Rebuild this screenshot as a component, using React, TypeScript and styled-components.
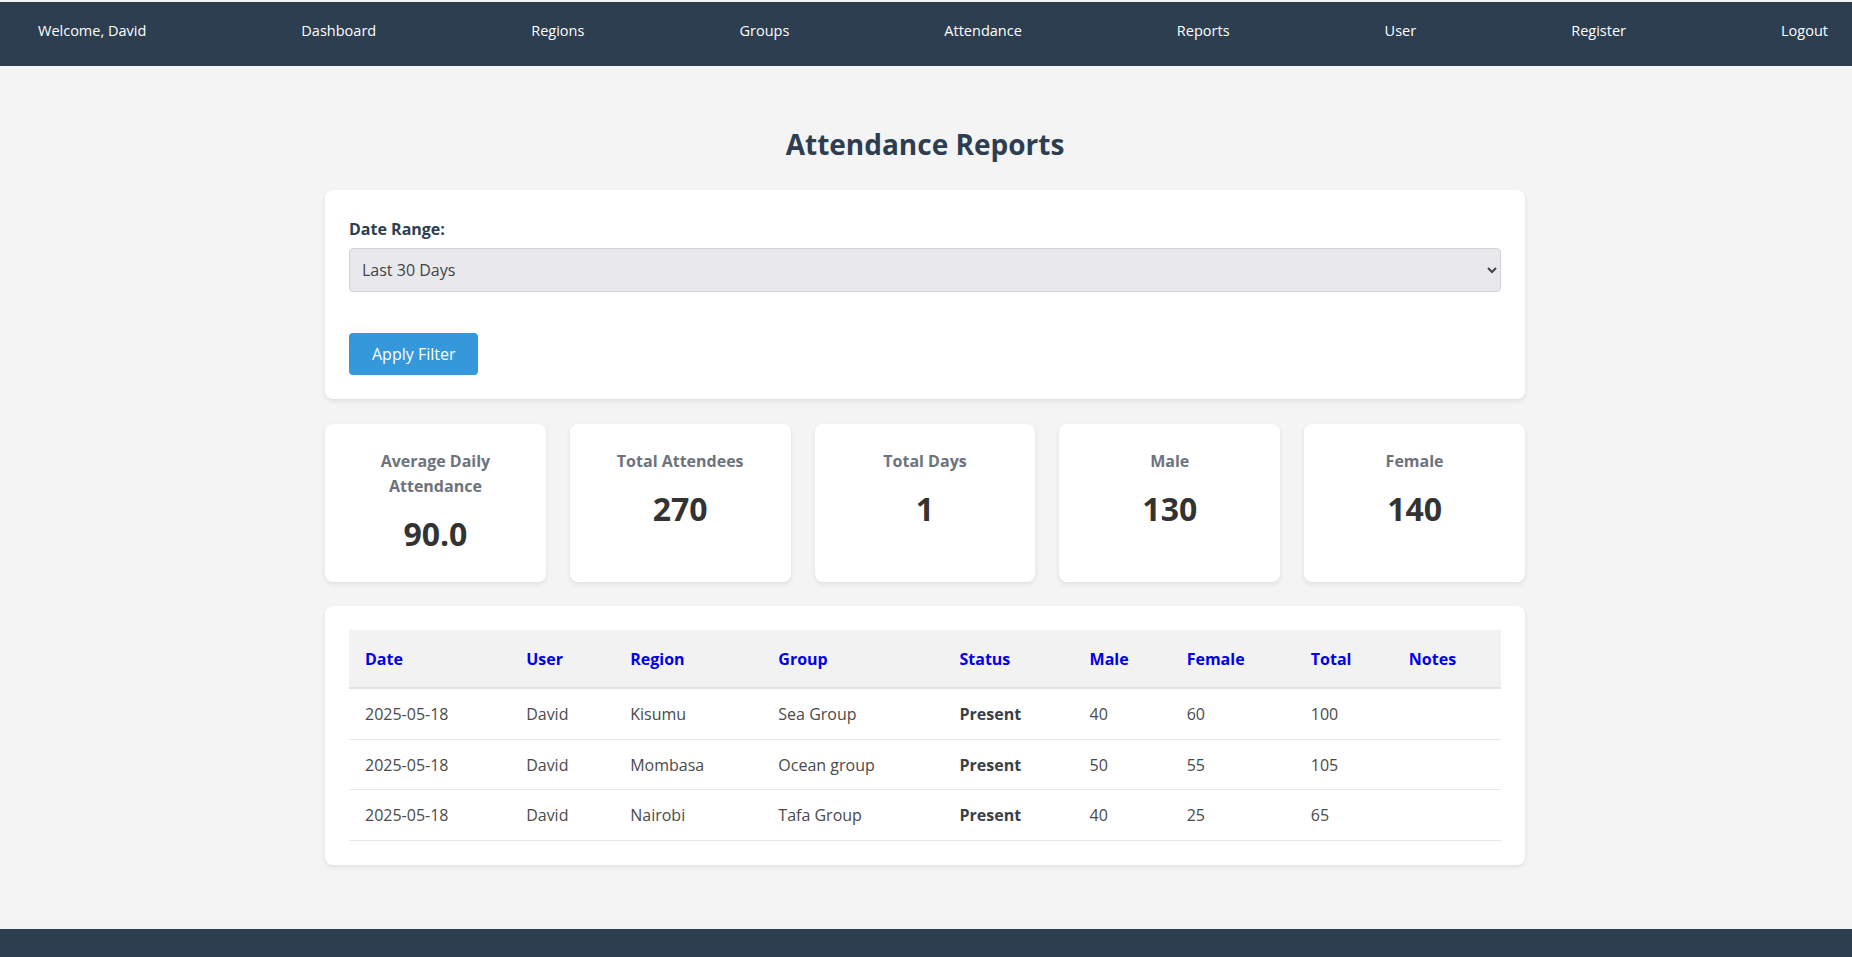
import React from "react";
import styled, { createGlobalStyle } from "styled-components";

const GlobalStyle = createGlobalStyle`
  * { box-sizing: border-box; }
  html, body {
    margin: 0;
    padding: 0;
    background: #f4f4f4;
    font-family: "Open Sans", "Noto Sans", Arial, sans-serif;
    color: #333;
    line-height: 1.6;
  }
`;

const Page = styled.div`
  padding-top: 2px;
  display: flex;
  flex-direction: column;
`;

const NavBar = styled.nav`
  height: 64px;
  background: #2c3e50;
  display: flex;
  align-items: flex-start;
  justify-content: space-between;
  padding: 17px 24px 0 38px;
`;

const NavItem = styled.a`
  color: #fff;
  font-size: 14.5px;
  line-height: 24px;
  text-decoration: none;
`;

const Main = styled.main`
  width: 1202px;
  margin: 0 auto;
  padding: 56px 2px 64px 0;
`;

const Title = styled.h1`
  margin: 0 0 23px;
  text-align: center;
  font-size: 28px;
  font-weight: 700;
  color: #2c3e50;
`;

const Card = styled.section`
  background: #fff;
  border-radius: 8px;
  box-shadow: 0 2px 5px rgba(0, 0, 0, 0.09);
  padding: 24px;
  margin-bottom: 25px;

  &:last-child {
    margin-bottom: 0;
  }
`;

const FieldLabel = styled.label`
  display: block;
  font-size: 16px;
  font-weight: 700;
  color: #2c3e50;
  margin: 3px 0 6px;
`;

const Select = styled.select`
  display: block;
  width: 100%;
  height: 44px;
  padding: 0 14px 0 8px;
  font-family: "Open Sans", "Noto Sans", Arial, sans-serif;
  font-size: 16px;
  color: #444;
  background-color: #e9e9ed;
  border: 1px solid #d4d4d8;
  border-radius: 4px;
  margin-bottom: 41px;
`;

const Button = styled.button`
  height: 42px;
  padding: 0 23px;
  background: #3498db;
  color: #fff;
  border: none;
  border-radius: 4px;
  font-family: "Open Sans", "Noto Sans", Arial, sans-serif;
  font-size: 16px;
  cursor: pointer;
`;

const StatsGrid = styled.div`
  display: grid;
  grid-template-columns: repeat(5, 1fr);
  gap: 24px;
  margin-bottom: 24px;
`;

const StatCard = styled.div`
  background: #fff;
  border-radius: 8px;
  box-shadow: 0 2px 5px rgba(0, 0, 0, 0.09);
  padding: 25px 32px 22px;
  text-align: center;
`;

const StatTitle = styled.h3`
  margin: 0 0 9px;
  font-size: 16px;
  line-height: 25px;
  font-weight: 700;
  color: #6c737d;
`;

const StatValue = styled.p`
  margin: 0;
  font-size: 32px;
  font-weight: 700;
  color: #333;
`;

const Table = styled.table`
  width: 100%;
  border-collapse: collapse;
  table-layout: fixed;
`;

const Th = styled.th`
  text-align: left;
  padding: 17px 16px 15px;
  background: #f2f2f2;
  color: #0000ee;
  font-size: 16px;
  font-weight: 700;
  border-bottom: 2px solid #e2e2e2;
`;

const Td = styled.td<{ $strong?: boolean }>`
  padding: 13px 16px 11px;
  font-size: 16px;
  color: ${(p) => (p.$strong ? "#3a3f47" : "#4a4a4a")};
  font-weight: ${(p) => (p.$strong ? 700 : 400)};
  border-bottom: 1px solid #e6e8eb;
`;

const Footer = styled.footer`
  background: #2c3e50;
  height: 60px;
  flex-shrink: 0;
`;

const navItems = [
  "Welcome, David",
  "Dashboard",
  "Regions",
  "Groups",
  "Attendance",
  "Reports",
  "User",
  "Register",
  "Logout",
];

const stats = [
  { title: "Average Daily Attendance", value: "90.0" },
  { title: "Total Attendees", value: "270" },
  { title: "Total Days", value: "1" },
  { title: "Male", value: "130" },
  { title: "Female", value: "140" },
];

const columns = [
  { name: "Date", width: 161 },
  { name: "User", width: 104 },
  { name: "Region", width: 148 },
  { name: "Group", width: 181 },
  { name: "Status", width: 130 },
  { name: "Male", width: 97 },
  { name: "Female", width: 124 },
  { name: "Total", width: 98 },
  { name: "Notes", width: 108 },
];

const rows = [
  { date: "2025-05-18", user: "David", region: "Kisumu", group: "Sea Group", status: "Present", male: 40, female: 60, total: 100, notes: "" },
  { date: "2025-05-18", user: "David", region: "Mombasa", group: "Ocean group", status: "Present", male: 50, female: 55, total: 105, notes: "" },
  { date: "2025-05-18", user: "David", region: "Nairobi", group: "Tafa Group", status: "Present", male: 40, female: 25, total: 65, notes: "" },
];

export default function App() {
  return (
    <>
      <GlobalStyle />
      <Page>
        <NavBar>
          {navItems.map((n) => (
            <NavItem key={n} href="#">
              {n}
            </NavItem>
          ))}
        </NavBar>
        <Main>
          <Title>Attendance Reports</Title>
          <Card>
            <FieldLabel htmlFor="range">Date Range:</FieldLabel>
            <Select id="range" defaultValue="30">
              <option value="7">Last 7 Days</option>
              <option value="30">Last 30 Days</option>
              <option value="90">Last 90 Days</option>
            </Select>
            <Button>Apply Filter</Button>
          </Card>
          <StatsGrid>
            {stats.map((s) => (
              <StatCard key={s.title}>
                <StatTitle>{s.title}</StatTitle>
                <StatValue>{s.value}</StatValue>
              </StatCard>
            ))}
          </StatsGrid>
          <Card>
            <Table>
              <colgroup>
                {columns.map((c) => (
                  <col key={c.name} style={{ width: c.width }} />
                ))}
              </colgroup>
              <thead>
                <tr>
                  {columns.map((c) => (
                    <Th key={c.name}>{c.name}</Th>
                  ))}
                </tr>
              </thead>
              <tbody>
                {rows.map((r, i) => (
                  <tr key={i}>
                    <Td>{r.date}</Td>
                    <Td>{r.user}</Td>
                    <Td>{r.region}</Td>
                    <Td>{r.group}</Td>
                    <Td $strong>{r.status}</Td>
                    <Td>{r.male}</Td>
                    <Td>{r.female}</Td>
                    <Td>{r.total}</Td>
                    <Td>{r.notes}</Td>
                  </tr>
                ))}
              </tbody>
            </Table>
          </Card>
        </Main>
        <Footer />
      </Page>
    </>
  );
}
